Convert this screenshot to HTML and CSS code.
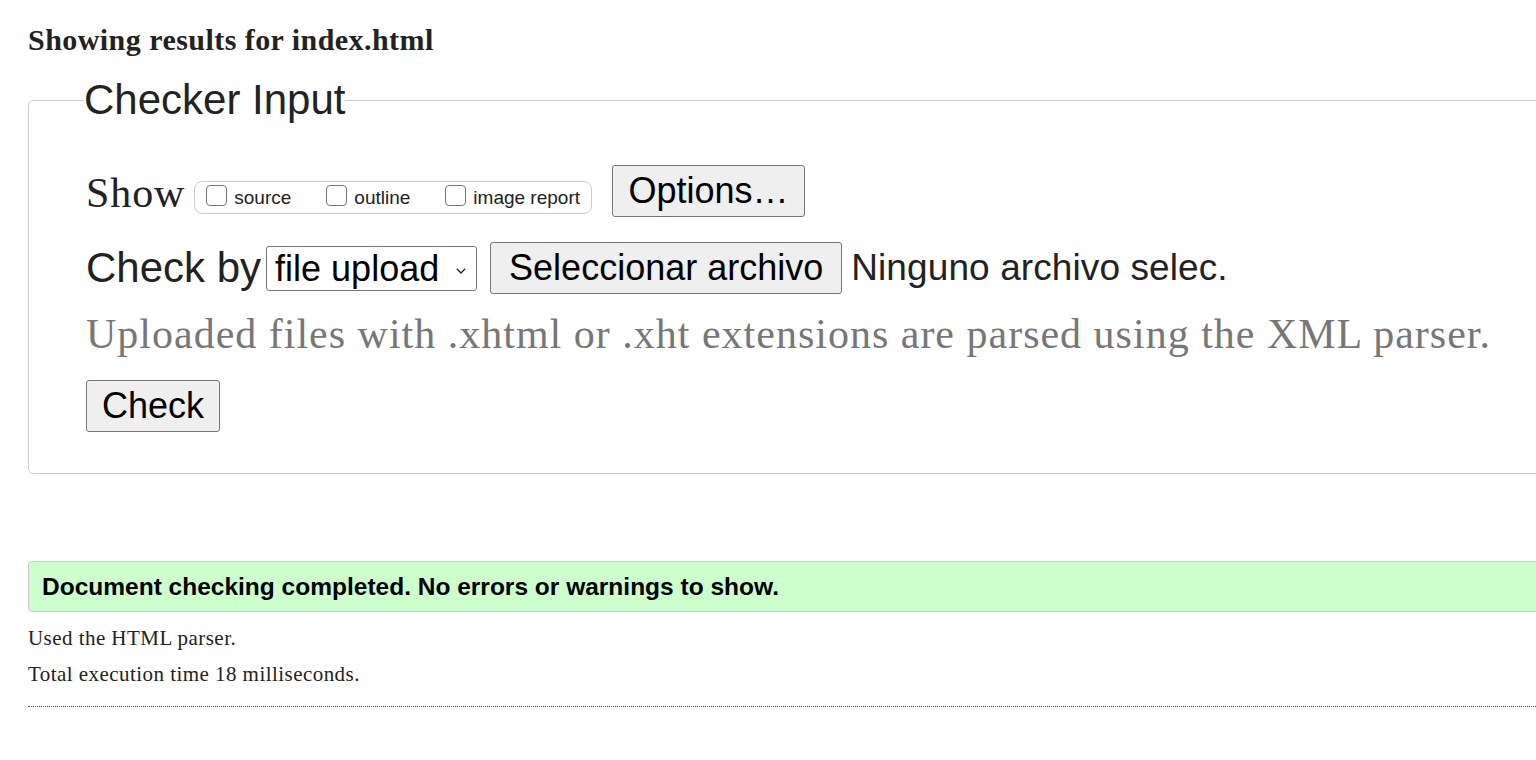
FILE: index.html
```html
<!DOCTYPE html>
<html lang="en">
<head>
<meta charset="utf-8">
<title>Showing results for index.html - Nu Html Checker</title>
<link rel="stylesheet" href="styles.css">
</head>
<body>
<h2 class="page-title">Showing results for index.html</h2>
<form class="checker-form">
  <fieldset class="checker-input">
    <legend class="checker-legend">Checker Input</legend>
    <div class="row row-show">
      <span class="show-label">Show</span>
      <span class="show-group">
        <label class="opt"><input type="checkbox" class="cb"> source</label>
        <label class="opt"><input type="checkbox" class="cb"> outline</label>
        <label class="opt"><input type="checkbox" class="cb"> image report</label>
      </span>
      <button type="button" class="btn btn-options">Options…</button>
    </div>
    <div class="row row-checkby">
      <span class="checkby-label">Check by</span>
      <span class="select-wrap">
        <select class="select">
          <option>file upload</option>
        </select>
        <svg class="select-arrow" width="10" height="6" viewBox="0 0 10 6" aria-hidden="true"><path d="M0.8 0.8 L5 5 L9.2 0.8" fill="none" stroke="#222" stroke-width="1.3"/></svg>
      </span>
      <span class="file-input">
        <button type="button" class="btn btn-file">Seleccionar archivo</button>
        <span class="file-status">Ninguno archivo selec.</span>
      </span>
    </div>
    <p class="hint">Uploaded files with .xhtml or .xht extensions are parsed using the XML parser.</p>
    <div class="row row-submit">
      <button type="button" class="btn btn-check">Check</button>
    </div>
  </fieldset>
</form>
<div class="results">
  <p class="success">Document checking completed. No errors or warnings to show.</p>
  <p class="details details-first">Used the HTML parser.</p>
  <p class="details">Total execution time 18 milliseconds.</p>
  <hr class="divider">
</div>
</body>
</html>
```

FILE: styles.css
```css
html {
  overflow: hidden;
}
body {
  margin: 0;
  padding: 0 0 0 28px;
  background: #fff;
  color: #222;
  font-family: "Liberation Serif", serif;
}
.page-title {
  margin: 0;
  padding-top: 23px;
  font-size: 30px;
  letter-spacing: 0.45px;
  line-height: 34px;
  font-weight: bold;
  color: #222;
}
.checker-form {
  margin-top: 19px;
}
.checker-input {
  width: 1600px;
  margin: 0;
  padding: 41px 0 41px 57px;
  border: 1px solid #ccc;
  border-radius: 5px;
  box-sizing: border-box;
}
.checker-legend {
  margin-left: -2px;
  padding: 0;
  font-family: "Liberation Sans", Arial, sans-serif;
  font-size: 42px;
  line-height: 48px;
  color: #222;
}
.row {
  display: flex;
  align-items: center;
}
.row-show {
  height: 52px;
}
.show-label {
  font-family: "Liberation Serif", serif;
  font-size: 42px;
  letter-spacing: 0.9px;
  line-height: 52px;
  margin-right: 9px;
  margin-top: 4px;
}
.show-group {
  display: flex;
  align-items: center;
  height: 31px;
  padding: 0 11px;
  margin-top: 13px;
  border: 1px solid #ccc;
  border-radius: 8px;
  font-family: "Liberation Sans", Arial, sans-serif;
  font-size: 19px;
  color: #222;
}
.opt {
  display: flex;
  align-items: flex-end;
  gap: 7px;
  margin-right: 35px;
}
.opt:last-child {
  margin-right: 0;
}
.cb {
  appearance: none;
  margin: 0;
  width: 21px;
  height: 21px;
  border: 1.5px solid #767676;
  border-radius: 4px;
  background: #fff;
  position: relative;
  top: -3px;
}
.btn {
  font-family: "Liberation Sans", Arial, sans-serif;
  color: #000;
  background: #efefef;
  border: 1px solid #767676;
  border-radius: 3px;
  padding: 0 14px;
}
.btn-options {
  margin-left: 20px;
  height: 52px;
  font-size: 36px;
  padding: 0 15.5px;
}
.row-checkby {
  margin-top: 25px;
  height: 52px;
}
.checkby-label {
  font-family: "Liberation Sans", Arial, sans-serif;
  font-size: 42px;
  color: #222;
  margin-right: 5px;
}
.select-wrap {
  position: relative;
  display: flex;
  align-items: center;
}
.select {
  appearance: none;
  height: 45px;
  width: 211px;
  font-family: "Liberation Sans", Arial, sans-serif;
  font-size: 36px;
  color: #000;
  border: 1px solid #767676;
  border-radius: 3px;
  background: #fff;
  padding: 0 0 0 8px;
}
.select-arrow {
  position: absolute;
  right: 11px;
  top: 22px;
  pointer-events: none;
}
.file-input {
  display: flex;
  align-items: center;
  margin-left: 13px;
}
.btn-file {
  height: 52px;
  font-size: 36px;
  padding: 0 18px;
}
.file-status {
  margin-left: 9px;
  font-family: "Liberation Sans", Arial, sans-serif;
  font-size: 37px;
  letter-spacing: 0.1px;
  color: #222;
}
.hint {
  margin: 14px 0 0;
  font-family: "Liberation Serif", serif;
  font-size: 42px;
  letter-spacing: 1px;
  line-height: 52px;
  color: #777;
}
.row-submit {
  margin-top: 20px;
}
.btn-check {
  height: 52px;
  font-size: 36px;
  padding: 0 15px;
}
.results {
  margin-top: 87px;
}
.success {
  width: 1600px;
  box-sizing: border-box;
  margin: 0;
  height: 51px;
  padding: 0 13px;
  display: flex;
  align-items: center;
  background: #ccffcc;
  border: 1px solid #ccc;
  border-radius: 4px;
  font-family: "Liberation Sans", Arial, sans-serif;
  font-weight: bold;
  font-size: 24.5px;
  color: #000;
}
.details {
  margin: 0;
  font-family: "Liberation Serif", serif;
  font-size: 21px;
  letter-spacing: 0.45px;
  line-height: 36px;
  color: #222;
}
.details-first {
  margin-top: 8px;
}
.divider {
  margin: 14px 0 0;
  width: 1600px;
  border: 0;
  border-top: 1px dotted #555;
}
```
